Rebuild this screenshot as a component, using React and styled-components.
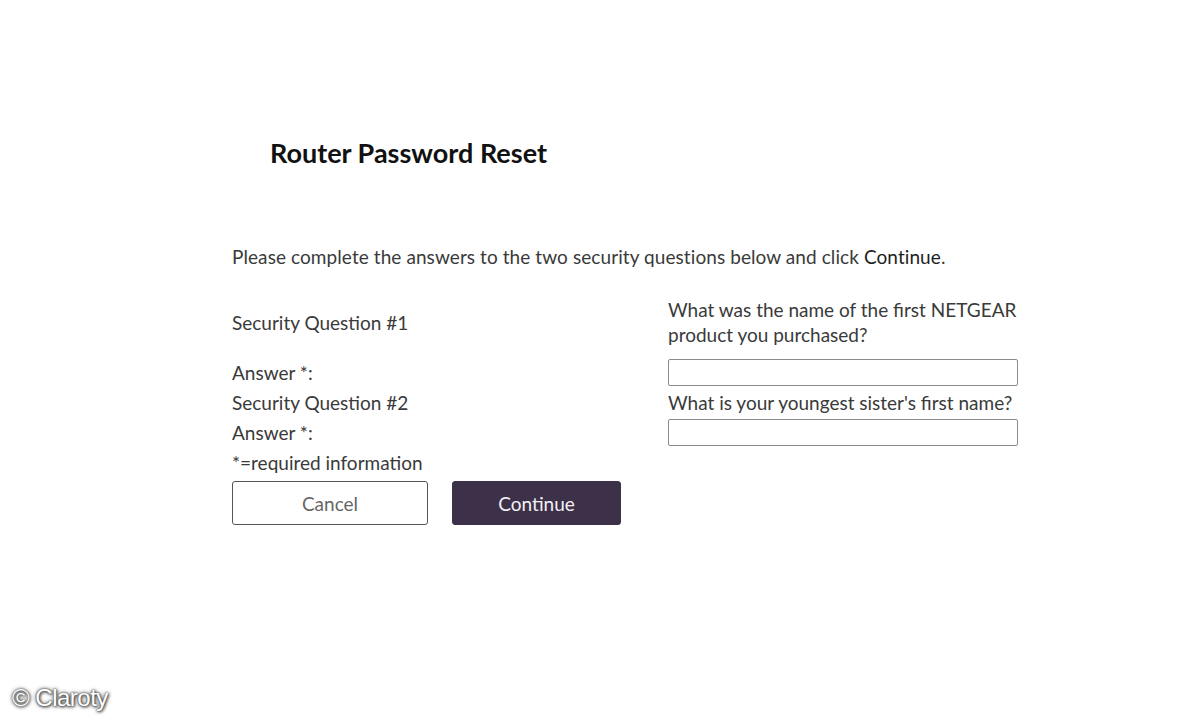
import React from 'react'
import styled, { createGlobalStyle } from 'styled-components'

const GlobalStyle = createGlobalStyle`
  html, body {
    margin: 0;
    padding: 0;
    background: #ffffff;
  }
  body {
    font-family: Lato, "Open Sans", sans-serif;
    color: #3a3a3a;
  }
`

const Page = styled.div`
  position: relative;
  width: 1200px;
  height: 720px;
  overflow: hidden;
`

const Content = styled.div`
  padding: 136px 0 0 232px;
`

const Title = styled.h1`
  margin: 0 0 74px 38px;
  font-size: 27px;
  line-height: 34px;
  font-weight: 700;
  color: #111111;
`

const Intro = styled.p`
  margin: 0 0 28px;
  font-size: 19px;
  line-height: 25px;
  letter-spacing: 0.08px;
  color: #3a3a3a;
`

const Strong = styled.span`
  color: #1e1e1e;
`

const Row = styled.div`
  display: grid;
  grid-template-columns: 436px 350px;
  align-items: center;
  margin-top: ${(p) => p.$gap || 0}px;
  font-size: 19px;
  line-height: 25px;
`

const Label = styled.div`
  color: #3a3a3a;
`

const Question = styled.div`
  color: #3a3a3a;
  width: 350px;
`

const Input = styled.input`
  box-sizing: border-box;
  width: 350px;
  height: 27px;
  border: 1px solid #8a8a8a;
  border-radius: 2px;
  padding: 0 6px;
  font: inherit;
  background: #fff;
`

const Buttons = styled.div`
  display: flex;
  gap: 24px;
  margin-top: 6px;
`

const Button = styled.button`
  box-sizing: border-box;
  width: ${(p) => p.$width}px;
  height: 44px;
  border-radius: 3px;
  font-family: Lato, "Open Sans", sans-serif;
  font-size: 19px;
  cursor: pointer;
  border: ${(p) => (p.$primary ? '1px solid #3d3049' : '1px solid #555555')};
  background: ${(p) => (p.$primary ? '#3d3049' : '#ffffff')};
  color: ${(p) => (p.$primary ? '#f2f0f4' : '#666666')};
`

const Watermark = styled.div`
  position: absolute;
  left: 12px;
  bottom: 8px;
  font-family: "Liberation Sans", Arial, sans-serif;
  font-size: 24px;
  color: #ffffff;
  letter-spacing: -0.5px;
  text-shadow: 0 0 2px #333, 0 0 4px #555, 1px 1px 3px #444;
`

export default function App() {
  return (
    <Page>
      <GlobalStyle />
      <Content>
        <Title>Router Password Reset</Title>
        <Intro>
          Please complete the answers to the two security questions below and click <Strong>Continue</Strong>.
        </Intro>
        <Row>
          <Label>Security Question #1</Label>
          <Question>What was the name of the first NETGEAR product you purchased?</Question>
        </Row>
        <Row $gap={12}>
          <Label>Answer *:</Label>
          <Input type="text" />
        </Row>
        <Row $gap={4}>
          <Label>Security Question #2</Label>
          <Question>What is your youngest sister's first name?</Question>
        </Row>
        <Row $gap={4}>
          <Label>Answer *:</Label>
          <Input type="text" />
        </Row>
        <Row $gap={4}>
          <Label>*=required information</Label>
        </Row>
        <Buttons>
          <Button $width={196}>Cancel</Button>
          <Button $width={169} $primary>Continue</Button>
        </Buttons>
      </Content>
      <Watermark>© Claroty</Watermark>
    </Page>
  )
}
